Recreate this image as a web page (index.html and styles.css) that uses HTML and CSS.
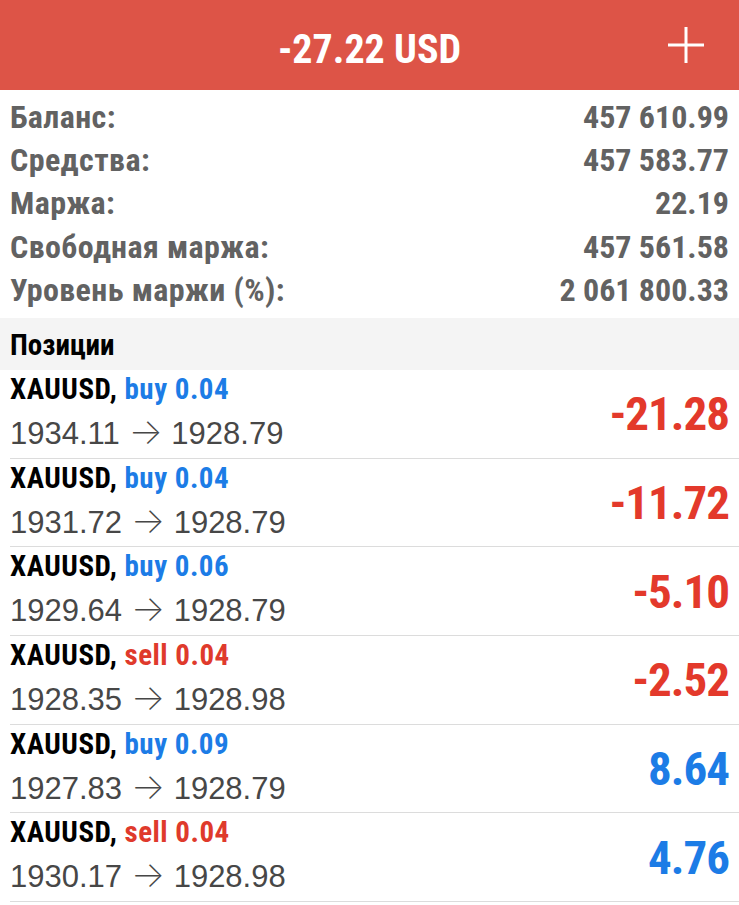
FILE: index.html
```html
<!DOCTYPE html>
<html>
<head>
    <meta charset="UTF-8">
    <title>Торговля</title>
    <link rel="stylesheet" href="styles.css">
</head>
<body>
    <div class="top">
        <div class="total">-27.22 USD</div>
        <a href="#" class="add">
            <svg width="36" height="36" viewBox="0 0 36 36"><path d="M18 0V36M0 18H36" stroke="#fff" stroke-width="3"/></svg>
        </a>
    </div>

    <ul class="info">
        <li><span>Баланс:</span><span>457 610.99</span></li>
        <li><span>Средства:</span><span>457 583.77</span></li>
        <li><span>Маржа:</span><span>22.19</span></li>
        <li><span>Свободная маржа:</span><span>457 561.58</span></li>
        <li><span>Уровень маржи (%):</span><span>2 061 800.33</span></li>
    </ul>

    <div class="title">Позиции</div>

    <ul class="pos">
        <li>
            <div class="deal">
                <p class="sym">XAUUSD, <span class="buy">buy 0.04</span></p>
                <p class="price">1934.11 <span class="arr">→</span> 1928.79</p>
            </div>
            <div class="profit loss">-21.28</div>
        </li>
        <li>
            <div class="deal">
                <p class="sym">XAUUSD, <span class="buy">buy 0.04</span></p>
                <p class="price">1931.72 <span class="arr">→</span> 1928.79</p>
            </div>
            <div class="profit loss">-11.72</div>
        </li>
        <li>
            <div class="deal">
                <p class="sym">XAUUSD, <span class="buy">buy 0.06</span></p>
                <p class="price">1929.64 <span class="arr">→</span> 1928.79</p>
            </div>
            <div class="profit loss">-5.10</div>
        </li>
        <li>
            <div class="deal">
                <p class="sym">XAUUSD, <span class="sell">sell 0.04</span></p>
                <p class="price">1928.35 <span class="arr">→</span> 1928.98</p>
            </div>
            <div class="profit loss">-2.52</div>
        </li>
        <li>
            <div class="deal">
                <p class="sym">XAUUSD, <span class="buy">buy 0.09</span></p>
                <p class="price">1927.83 <span class="arr">→</span> 1928.79</p>
            </div>
            <div class="profit gain">8.64</div>
        </li>
        <li>
            <div class="deal">
                <p class="sym">XAUUSD, <span class="sell">sell 0.04</span></p>
                <p class="price">1930.17 <span class="arr">→</span> 1928.98</p>
            </div>
            <div class="profit gain">4.76</div>
        </li>
    </ul>
</body>
</html>
```
FILE: styles.css
```css
*{
    margin: 0;
    padding: 0;
    border: 0;
}
ul,li{
    list-style: none;
}
html,body{
    width: 100%;
    background: #fff;
    font-family: "Roboto Condensed", Roboto, sans-serif;
    font-weight: bold;
}
.top{
    height: 90px;
    box-sizing: border-box;
    padding-top: 8px;
    background: #dd5447;
    display: grid;
    grid-template-columns: 1fr auto 1fr;
    align-items: center;
}
.total{
    grid-column: 2;
    color: #fff;
    font-size: 40px;
}
.add{
    grid-column: 3;
    justify-self: end;
    margin-right: 35px;
    margin-top: -8px;
    display: block;
    height: 36px;
}
.info{
    padding: 5.5px 10px 5.5px 10px;
}
.info li{
    display: flex;
    justify-content: space-between;
    height: 43.4px;
    line-height: 43.4px;
    font-size: 32px;
    color: #626262;
}
.info li span:first-child{
    letter-spacing: 0.4px;
}
.title{
    height: 52px;
    box-sizing: border-box;
    padding: 2px 10px 0;
    background: #f4f4f4;
    display: flex;
    align-items: center;
    font-size: 29px;
    color: #000;
}
.pos li{
    height: 88.7px;
    box-sizing: border-box;
    margin-left: 10px;
    padding-right: 10px;
    border-bottom: 1px solid #dcdcdc;
    display: flex;
    justify-content: space-between;
    align-items: center;
}
.deal{
    align-self: flex-start;
}
.sym{
    font-size: 29px;
    line-height: 38px;
    letter-spacing: 0.5px;
    color: #000;
}
.buy{
    color: #1c7ce6;
}
.sell{
    color: #df3a2c;
}
.price{
    font-family: "Liberation Sans", Arial, sans-serif;
    font-weight: normal;
    font-size: 31px;
    line-height: 46px;
    color: #474747;
}
.arr{
    font-family: Inter, "DejaVu Sans", sans-serif;
    font-weight: 200;
    font-size: 36px;
    line-height: 46px;
}
.profit{
    font-size: 47px;
    letter-spacing: -1px;
}
.loss{
    color: #e3392b;
}
.gain{
    color: #1c7ce6;
}
```
